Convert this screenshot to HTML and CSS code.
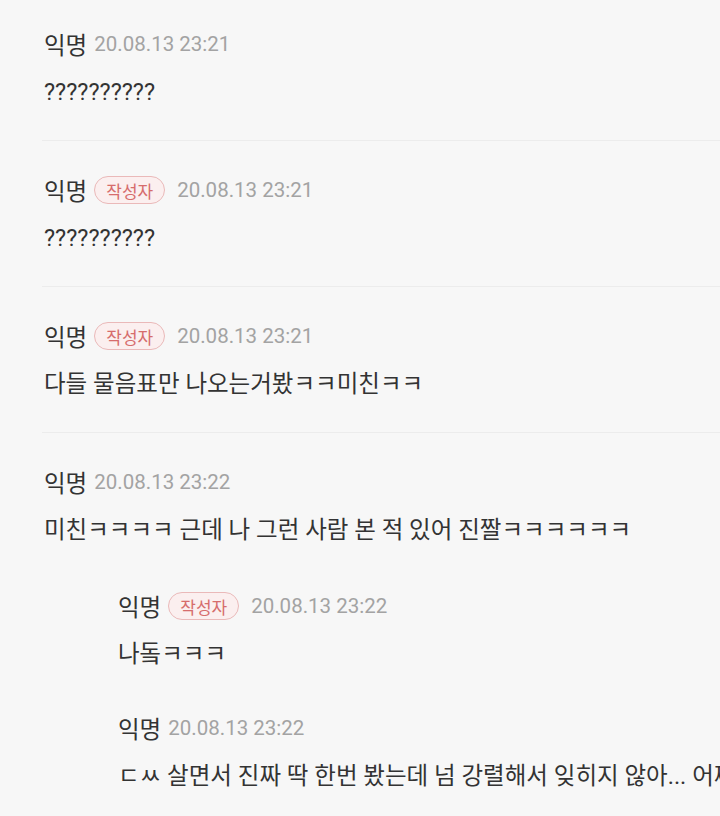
FILE: index.html
```html
<!DOCTYPE html>
<html lang="ko">
<head>
<meta charset="utf-8">
<link rel="stylesheet" href="styles.css">
</head>
<body>
<div class="list">
  <div class="comment first">
    <div class="head"><span class="name">익명</span><span class="time">20.08.13 23:21</span></div>
    <div class="text">??????????</div>
  </div>
  <div class="comment">
    <div class="head"><span class="name">익명</span><span class="badge">작성자</span><span class="time">20.08.13 23:21</span></div>
    <div class="text">??????????</div>
  </div>
  <div class="comment">
    <div class="head"><span class="name">익명</span><span class="badge">작성자</span><span class="time">20.08.13 23:21</span></div>
    <div class="text">다들 물음표만 나오는거봤ㅋㅋ미친ㅋㅋ</div>
  </div>
  <div class="comment last">
    <div class="head"><span class="name">익명</span><span class="time">20.08.13 23:22</span></div>
    <div class="text">미친ㅋㅋㅋㅋ 근데 나 그런 사람 본 적 있어 진짤ㅋㅋㅋㅋㅋㅋ</div>
    <div class="replies">
      <div class="reply">
        <div class="head"><span class="name">익명</span><span class="badge">작성자</span><span class="time">20.08.13 23:22</span></div>
        <div class="text">나돜ㅋㅋㅋ</div>
      </div>
      <div class="reply">
        <div class="head"><span class="name">익명</span><span class="time">20.08.13 23:22</span></div>
        <div class="text">ㄷㅆ 살면서 진짜 딱 한번 봤는데 넘 강렬해서 잊히지 않아... 어쩌다</div>
      </div>
    </div>
  </div>
</div>
</body>
</html>
```

FILE: styles.css
```css
html, body {
  margin: 0;
  padding: 0;
  background: #f7f7f7;
  overflow: hidden;
}
body {
  width: 720px;
  height: 816px;
  font-family: Roboto, "Noto Sans CJK KR", sans-serif;
  color: #333333;
}
.list {
  padding-left: 42px;
}
.comment {
  padding: 34px 0 33px 2px;
  border-bottom: 1px solid #ececec;
}
.comment.first {
  padding-top: 29px;
}
.comment.last {
  border-bottom: none;
}
.head {
  display: flex;
  align-items: center;
  height: 30px;
}
.name {
  font-size: 23.5px;
  color: #333;
  margin-right: 7px;
}
.time {
  font-size: 20.5px;
  color: #a3a3a3;
}
.badge {
  display: inline-flex;
  align-items: center;
  height: 28px;
  padding: 0 11px;
  border: 1.5px solid #eab9b9;
  border-radius: 14px;
  background: #fbefef;
  color: #d66c6c;
  font-size: 17px;
  margin-right: 12px;
  box-sizing: border-box;
}
.text {
  margin-top: 18px;
  font-size: 23.5px;
  line-height: 30px;
  white-space: nowrap;
}
.replies {
  padding-left: 74px;
  margin-top: 46px;
}
.reply + .reply {
  margin-top: 44px;
}
```
